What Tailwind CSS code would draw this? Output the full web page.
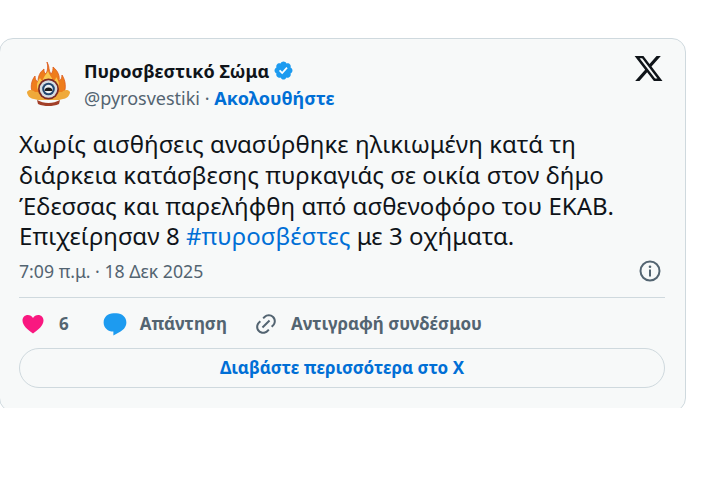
<!DOCTYPE html>
<html lang="en">
<head>
    <meta charset="UTF-8">
    <title>Post</title>
    <script src="https://cdn.jsdelivr.net/npm/@tailwindcss/browser@4"></script>
</head>
<body class="bg-white font-['Noto_Sans','Open_Sans',sans-serif]">
    <div class="h-[489px] w-[707px] overflow-hidden pt-[38px]">
        <!-- clipped at the bottom like the embed frame -->
        <div class="ml-[-1px] h-[370px] w-[687px] overflow-hidden">
            <article class="h-[374px] rounded-[14px] border border-[#cfd9de] bg-[#f7f9f9] pl-[19px] pr-[20px] pt-[12px]">
                <!-- Header -->
                <header class="flex justify-between">
                    <div class="flex h-[60px] items-center">
                        <svg class="ml-[8px] mt-[6px] h-[44px] w-[43px]" viewBox="0 0 43 44">
                            <path d="M20 0c3 5 1 8 4 12 2-2 2-5 2-7 5 4 7 9 6 14 2-1 3-3 3-6 4 6 4 13 2 19H6C3 26 4 19 8 14c0 3 1 5 3 6 0-6 2-10 6-13 0 2 0 4 2 5 2-4 2-8 1-12z" fill="#ee7d1c" stroke="#dc5a1e" stroke-width="0.800"/>
                            <path d="M21 9c1 4 4 6 5 10 2-1 3-2 3-4 3 4 4 9 2 13H11c-2-4-1-8 2-12 1 2 2 3 3 3 0-4 3-6 5-10z" fill="#f9c94f"/>
                            <path d="M0 30c2-3 6-2 8 0h27c2-2 6-3 8 0 0 3-3 7-7 7l-4 1H11l-4-1c-4 0-7-4-7-7z" fill="#efa93a"/>
                            <circle cx="21.500" cy="27" r="10.500" fill="#7d2a24"/>
                            <circle cx="21.500" cy="27" r="8.800" fill="#d7dde2"/>
                            <circle cx="21.500" cy="27" r="6.300" fill="#23466f"/>
                            <circle cx="21.500" cy="27" r="4.300" fill="#eef1f3"/>
                            <path d="M17.500 29a4 3.600 0 0 1 8 0z" fill="#1b1b1b"/>
                            <path d="M10 38c4 2 7 3 11.500 3S29 40 33 38l-1 4c-3 1.500-7 2-10.500 2S14 43.500 11 42z" fill="#a23f28"/>
                        </svg>
                        <div class="ml-[14px] mt-[6px]">
                            <div class="flex items-center gap-[4px] text-[18px] leading-[24px] font-bold text-[#0f1419]">
                                <span>Πυροσβεστικό Σώμα</span>
                                <svg class="h-[21px] w-[21px]" viewBox="0 0 22 22">
                                    <path fill="#1d9bf0" d="M20.396 11c-.018-.646-.215-1.275-.57-1.816-.354-.54-.852-.972-1.438-1.246.223-.607.27-1.264.14-1.897-.131-.634-.437-1.218-.882-1.687-.47-.445-1.053-.75-1.687-.882-.633-.13-1.29-.083-1.897.14-.273-.587-.704-1.086-1.245-1.44S11.647 1.62 11 1.604c-.646.017-1.273.213-1.813.568s-.969.854-1.24 1.44c-.608-.223-1.267-.272-1.902-.14-.635.13-1.22.436-1.69.882-.445.47-.749 1.055-.878 1.688-.13.633-.08 1.29.144 1.896-.587.274-1.087.705-1.443 1.245-.356.54-.555 1.17-.574 1.817.02.647.218 1.276.574 1.817.356.54.856.972 1.443 1.245-.224.606-.274 1.263-.144 1.896.13.634.433 1.218.877 1.688.47.443 1.054.747 1.687.878.633.132 1.29.084 1.897-.136.274.586.705 1.084 1.246 1.439.54.354 1.17.551 1.816.569.647-.016 1.276-.213 1.817-.567s.972-.854 1.245-1.44c.604.239 1.266.296 1.903.164.636-.132 1.22-.447 1.68-.907.46-.46.776-1.044.908-1.681s.075-1.299-.165-1.903c.586-.274 1.084-.705 1.439-1.246.354-.54.551-1.17.569-1.816z"/>
                                    <path fill="#fff" d="M9.662 14.85l-3.429-3.428 1.293-1.302 2.072 2.072 4.4-4.794 1.347 1.246z"/>
                                </svg>
                            </div>
                            <div class="mt-[3px] text-[18px] leading-[24px] text-[#536471]">@pyrosvestiki · <span class="font-bold text-[#006fd6]">Ακολουθήστε</span></div>
                        </div>
                    </div>
                    <svg class="mr-[1px] mt-[2px] h-[31px] w-[31px]" viewBox="0 0 24 24">
                        <path fill="#0f1419" d="M18.244 2.25h3.308l-7.227 8.26 8.502 11.24H16.17l-5.214-6.817L4.99 21.75H1.68l7.73-8.835L1.254 2.25H8.08l4.713 6.231zm-1.161 17.52h1.833L7.084 4.126H5.117z"/>
                    </svg>
                </header>

                <!-- Text -->
                <p class="mt-[18px] w-[600px] text-[24px] leading-[30.8px] tracking-[0.06px] text-[#0f1419]">Χωρίς αισθήσεις ανασύρθηκε ηλικιωμένη κατά τη διάρκεια κατάσβεσης πυρκαγιάς σε οικία στον δήμο Έδεσσας και παρελήφθη από ασθενοφόρο του ΕΚΑΒ. Επιχείρησαν 8 <span class="text-[#006fd6]">#πυροσβέστες</span> με 3 οχήματα.</p>

                <!-- Date -->
                <div class="mt-[7px] flex items-center justify-between">
                    <span class="text-[17.7px] leading-[24px] text-[#536471]">7:09 π.μ. · 18 Δεκ 2025</span>
                    <svg class="mr-[3px] h-[24px] w-[24px]" viewBox="0 0 24 24" fill="none">
                        <circle cx="12" cy="12" r="9.500" stroke="#536471" stroke-width="2"/>
                        <rect x="11" y="10.500" width="2" height="7" fill="#536471"/>
                        <circle cx="12" cy="7.800" r="1.300" fill="#536471"/>
                    </svg>
                </div>
                <div class="mt-[14px] border-t border-[#cfd9de]"></div>

                <!-- Actions -->
                <div class="mt-[12px] flex h-[28px] items-center text-[17px] font-bold text-[#536471]">
                    <svg class="ml-[2px] h-[24px] w-[24px]" viewBox="0 0 24 24">
                        <path fill="#f91880" d="M12 21.600C6.500 17.600 1.500 13.400 1.500 8.500 1.500 5.200 4 3 6.800 3c2.200 0 4.100 1.100 5.200 3 1.100-1.900 3-3 5.200-3 2.800 0 5.300 2.200 5.300 5.500 0 4.900-5 9.100-10.500 13.100z"/>
                    </svg>
                    <span class="ml-[14px]">6</span>
                    <svg class="ml-[33px] h-[26px] w-[26px]" viewBox="0 0 24 24">
                        <path fill="#1d9bf0" d="M1.500 10.500C1.500 5.500 5.500 2 10.500 2h3c5 0 9 3.800 9 8.500 0 4.500-3.500 7.500-7 9.300L10.500 22.500v-3.600C5.500 18.900 1.500 15.500 1.500 10.500z"/>
                    </svg>
                    <span class="ml-[12px]">Απάντηση</span>
                    <svg class="ml-[27px] h-[24px] w-[24px]" viewBox="0 0 24 24">
                        <path fill="#536471" d="M18.360 5.640c-1.950-1.960-5.110-1.960-7.070 0L9.880 7.050 8.460 5.640l1.420-1.420c2.730-2.730 7.170-2.730 9.900 0 2.730 2.740 2.730 7.170 0 9.900l-1.420 1.420-1.410-1.420 1.410-1.410c1.960-1.960 1.960-5.120 0-7.070zm-2.120 3.530l-7.070 7.070-1.410-1.410 7.070-7.070 1.410 1.410zm-12.020.71l1.420-1.420 1.410 1.420-1.410 1.410c-1.960 1.960-1.960 5.120 0 7.070 1.950 1.960 5.110 1.960 7.070 0l1.410-1.410 1.420 1.410-1.420 1.420c-2.730 2.730-7.170 2.730-9.900 0-2.730-2.740-2.730-7.170 0-9.900z"/>
                    </svg>
                    <span class="ml-[13px]">Αντιγραφή συνδέσμου</span>
                </div>

                <!-- Read more -->
                <div class="mt-[10px] flex h-[40px] items-center justify-center rounded-full border border-[#cfd9de] text-[17px] font-bold text-[#006fd6]">Διαβάστε περισσότερα στο Χ</div>
            </article>
        </div>
    </div>
</body>
</html>
